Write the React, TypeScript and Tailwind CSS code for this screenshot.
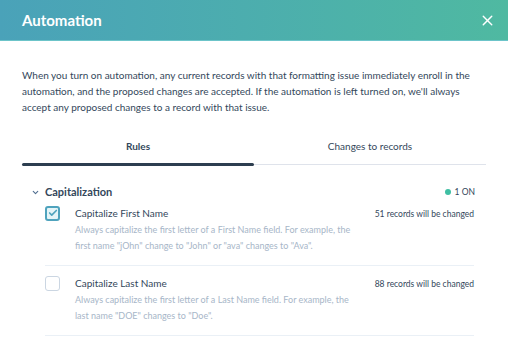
import { Check, ChevronDown, X } from 'lucide-react'

const RULES = [
  {
    title: 'Capitalize First Name',
    desc: 'Always capitalize the first letter of a First Name field. For example, the first name "jOhn" change to "John" or "ava" changes to "Ava".',
    count: 51,
    on: true,
  },
  {
    title: 'Capitalize Last Name',
    desc: 'Always capitalize the first letter of a Last Name field. For example, the last name "DOE" changes to "Doe".',
    count: 88,
    on: false,
  },
]

export default function App() {
  return (
    <div className="h-[337px] w-[508px] overflow-hidden bg-white font-['Lato',sans-serif] text-[#33475b]">
      <div className="flex h-[41px] items-center justify-between border-b border-[#6cc4c9] bg-gradient-to-r from-[#4aa2b9] to-[#4fb9a1] pl-[22px] pr-[12px]">
        <h1 className="text-[15px] font-bold text-white">Automation</h1>
        <X className="h-[17px] w-[17px] text-white" strokeWidth={2} />
      </div>

      <div className="px-[22px] pt-[26px]">
        <p className="text-[10px] leading-[16px]">
          When you turn on automation, any current records with that formatting issue immediately enroll in the
          automation, and the proposed changes are accepted. If the automation is left turned on, we'll always accept
          any proposed changes to a record with that issue.
        </p>

        <div className="mt-[24px] flex text-[10px]">
          <div className="flex-1">
            <div className="pb-[9px] text-center font-bold">Rules</div>
            <div className="h-[3px] rounded-full bg-[#2d3e50]" />
          </div>
          <div className="flex-1">
            <div className="pb-[9px] text-center">Changes to records</div>
            <div className="mt-[1px] h-[1px] bg-[#dfe3eb]" />
          </div>
        </div>

        <div className="mt-[18px] flex items-center justify-between pl-[9px] pr-[11px]">
          <div className="flex items-center gap-[5px]">
            <ChevronDown className="h-[9px] w-[9px] text-[#516f90]" strokeWidth={3} />
            <span className="text-[11px] font-bold">Capitalization</span>
          </div>
          <div className="flex items-center gap-[4px] text-[8.5px]">
            <span className="h-[6px] w-[6px] rounded-full bg-[#3fbfa3]" />
            1 ON
          </div>
        </div>

        <div className="ml-[23px] mr-[12px] mt-[5px]">
          {RULES.map((r, i) => (
            <div key={r.title} className={`flex border-b border-[#eaf0f6] pb-[11px] ${i === 0 ? 'pt-0' : 'pt-[10px]'}`}>
              <div className="w-[30px] shrink-0">
                {r.on ? (
                  <div className="flex h-[15px] w-[15px] items-center justify-center rounded-[3px] border-2 border-[#4fa3bd] bg-[#e5f5f8]">
                    <Check className="h-[10px] w-[10px] text-[#4fa3bd]" strokeWidth={4} />
                  </div>
                ) : (
                  <div className="h-[15px] w-[15px] rounded-[3px] border border-[#cbd6e2] bg-white" />
                )}
              </div>
              <div className="w-[280px]">
                <div className="text-[10px] leading-[15px]">{r.title}</div>
                <div className="mt-[1px] text-[9px] leading-[16px] text-[#a7b6c8]">{r.desc}</div>
              </div>
              <div className="ml-auto whitespace-nowrap pt-[2px] text-[8.5px]">{r.count} records will be changed</div>
            </div>
          ))}
        </div>
      </div>
    </div>
  )
}
